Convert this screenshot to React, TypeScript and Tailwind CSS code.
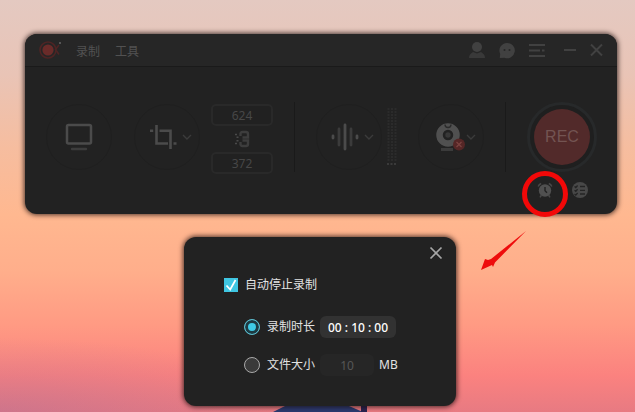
import { useState } from "react";
import type { ReactNode } from "react";

function ToolButton({ label, children, menu }: { label: string; children: ReactNode; menu?: boolean }) {
  return (
    <button
      type="button"
      aria-label={label}
      className={`flex h-[66px] w-[66px] shrink-0 items-center rounded-full border border-[#1f1f1f] text-[#4b4b4b] ${
        menu ? "justify-end gap-1 pr-[6px]" : "justify-center"
      }`}
    >
      {children}
      {menu && (
        <svg width="12" height="12" viewBox="0 0 12 12" fill="none" stroke="#3b3b3b" strokeWidth="1.4">
          <path d="M2 4l4 4 4-4" />
        </svg>
      )}
    </button>
  );
}

function SizeInput({ label, value }: { label: string; value: string }) {
  return (
    <input
      aria-label={label}
      defaultValue={value}
      className="h-[22px] w-[62px] rounded-[5px] border-2 border-[#292929] bg-[#212121] text-center text-xs text-[#474747] outline-none"
    />
  );
}

function Divider() {
  return <div className="h-[70px] w-px bg-[#1a1a1a]" />;
}

function TitleBar() {
  return (
    <header className="flex h-[33px] items-center rounded-t-xl border-b border-[#1a1a1a] bg-[#262626] pr-[14px] pl-[13px] text-xs text-[#525252]">
      <svg width="24" height="20" viewBox="0 0 24 20" fill="none">
        <circle cx="10" cy="10" r="8" stroke="#4e2424" strokeWidth="1.6" />
        <circle cx="10" cy="10" r="5.6" fill="#6a2b29" />
        <path d="M21 5l-3.5 4.500 3.500 5" stroke="#4e2424" strokeWidth="1.6" />
        <circle cx="22" cy="3" r="1" fill="#666" />
      </svg>
      <nav className="ml-[14px] flex gap-[15px] pt-1">
        <button type="button">录制</button>
        <button type="button">工具</button>
      </nav>
      <div className="ml-auto flex items-center gap-[14px] text-[#414141]">
        <button type="button" aria-label="账户">
          <svg width="16" height="18" viewBox="0 0 16 18" fill="currentColor">
            <circle cx="8" cy="6" r="5" />
            <path d="M0 17c0-3 1.500-4.500 4-6l4 1.500 4-1.500c2.500 1.500 4 3 4 6z" fill="#393939" />
          </svg>
        </button>
        <button type="button" aria-label="反馈">
          <svg width="16" height="18" viewBox="0 0 16 18">
            <path d="M8 2a7.600 7.600 0 1 1-2.500 14.700L.8 17l.4-4A7.600 7.600 0 0 1 8 2z" fill="currentColor" />
            <circle cx="5.500" cy="9" r="1" fill="#262626" />
            <circle cx="10.500" cy="9" r="1" fill="#262626" />
          </svg>
        </button>
        <button type="button" aria-label="菜单">
          <svg width="16" height="18" viewBox="0 0 16 18" fill="none" stroke="currentColor" strokeWidth="2">
            <path d="M0 4h16M0 9.500h11M13 9.500h2.500M0 15h16" />
          </svg>
        </button>
        <button type="button" aria-label="最小化" className="ml-[5px]">
          <svg width="12" height="14" viewBox="0 0 12 14" stroke="currentColor" strokeWidth="2">
            <path d="M0 7h12" />
          </svg>
        </button>
        <button type="button" aria-label="关闭">
          <svg width="13" height="14" viewBox="0 0 13 14" stroke="currentColor" strokeWidth="2">
            <path d="M1 1.500l11 11M12 1.500l-11 11" />
          </svg>
        </button>
      </div>
    </header>
  );
}

function LevelMeter() {
  return (
    <svg width="10" height="58" viewBox="0 0 10 58" fill="none" strokeWidth="2">
      <path d="M1.500 0v54M5 0v54M8.500 0v54" stroke="#2b2b2b" strokeDasharray="2 1" />
      <path d="M0 56h10" stroke="#3a3a3a" strokeDasharray="2 1.500" />
    </svg>
  );
}

function Recorder() {
  return (
    <section className="rounded-xl bg-[#222222] shadow-[0_0_5px_1px_rgba(20,10,10,0.75)]">
      <TitleBar />
      <div className="flex items-center justify-between pt-[33px] pr-[20px] pl-[21px]">
        <div className="flex items-center">
          <ToolButton label="全屏">
            <svg width="28" height="28" viewBox="0 0 28 28" fill="none" stroke="currentColor">
              <rect x="2" y="2" width="24" height="18.500" rx="1.500" strokeWidth="2.500" />
              <path d="M7 26h14" stroke="#3c3c3c" strokeWidth="2.400" strokeLinecap="round" />
            </svg>
          </ToolButton>
          <div className="ml-[22px]">
            <ToolButton label="自定义区域" menu>
              <svg width="28" height="26" viewBox="0 0 28 26" fill="none" stroke="currentColor" strokeWidth="2.600">
                <path d="M7.500 1v18.500H19M10.500 6.700h11V25M1 6.700h3.200M24.500 19.500h3" />
              </svg>
            </ToolButton>
          </div>
          <div className="ml-[11px] flex flex-col items-center gap-[3px] pt-1">
            <SizeInput label="宽度" value="624" />
            <button type="button" aria-label="锁定比例">
              <svg width="16" height="20" viewBox="0 0 16 20" fill="none" stroke="#3d3d3d" strokeWidth="2.400">
                <path d="M6.500 7V5.500a2 2 0 0 1 2-2.500h3.500a2 2 0 0 1 2 2v3.500H8.500M6.500 13v1.500a2 2 0 0 0 2 2.500h3.500a2 2 0 0 0 2-2v-3.500H8.500" />
                <path d="M1 5.500h2M1 14.500h2M2.500 8.300h2M2.500 11.700h2" stroke="#4a4a4a" strokeWidth="1.600" />
              </svg>
            </button>
            <SizeInput label="高度" value="372" />
          </div>
        </div>
        <Divider />
        <div className="flex items-center gap-[5px]">
          <ToolButton label="声音" menu>
            <svg width="28" height="28" viewBox="0 0 28 28" fill="none" stroke="currentColor" strokeWidth="2.800" strokeLinecap="round">
              <path d="M14 2v24M2 13v2M26 13v2" />
              <path d="M8 6v16M20 6v16" stroke="#3b3b3b" />
            </svg>
          </ToolButton>
          <LevelMeter />
        </div>
        <ToolButton label="摄像头" menu>
          <svg className="-mr-1" width="32" height="30" viewBox="0 0 32 30" fill="none">
            <circle cx="15" cy="13" r="8.500" stroke="#505050" strokeWidth="6.500" />
            <circle cx="15" cy="13" r="2.700" fill="#383838" />
            <path d="M12 2.500a3 3 0 0 0 6 0" stroke="#2b2b2b" strokeWidth="1.400" />
            <path d="M8 27.500h12" stroke="#3b3b3b" strokeWidth="3" />
            <circle cx="26" cy="22.500" r="6" fill="#552626" />
            <path d="M23.500 20l5 5M28.500 20l-5 5" stroke="#7d4341" strokeWidth="1.200" />
          </svg>
        </ToolButton>
        <Divider />
        <button
          type="button"
          className="flex h-[70px] w-[70px] items-center justify-center rounded-full border-[3px] border-[#27292a] bg-[#1f1f1f]"
        >
          <span className="flex h-14 w-14 items-center justify-center rounded-full bg-[#522a2a] font-['Liberation_Sans',sans-serif] text-base text-[#735452]">
            REC
          </span>
        </button>
      </div>
      <div className="flex justify-end gap-[19px] pt-[8px] pr-[29px] pb-4">
        <button type="button" aria-label="定时录制" className="relative h-4 w-4">
          <svg width="16" height="16" viewBox="0 0 16 16" fill="none">
            <circle cx="8" cy="8.500" r="6.200" fill="#505050" />
            <path d="M1.200 4.500a5 5 0 0 1 3-3M14.800 4.500a5 5 0 0 0-3-3M4.500 13l-1.500 2.300M11.500 13l1.500 2.300" stroke="#484848" strokeWidth="1.500" />
            <path d="M8 5v3.800l2 2" stroke="#222" strokeWidth="1.400" />
          </svg>
          <span className="absolute -top-[11px] -left-[15px] h-[46px] w-[46px] rounded-full border-[5px] border-[#f20808]" />
        </button>
        <button type="button" aria-label="任务列表" className="h-4 w-4">
          <svg width="16" height="16" viewBox="0 0 16 16" fill="none">
            <circle cx="8" cy="8" r="8" fill="#484848" />
            <path d="M2.500 4.500l1.300 1 1.800-2M2.500 8.300l1.300 1 1.800-2M2.500 12l1.300 1 1.800-2M8 4.500h5M8 8.300h5M8 12h5" stroke="#242424" strokeWidth="1.300" />
          </svg>
        </button>
      </div>
    </section>
  );
}

const radioClass =
  "h-4 w-4 appearance-none rounded-full border border-[#a8a8a8] bg-[#3a3a3a] checked:border-[#5fb9c9] checked:bg-[#3fcbe6] checked:shadow-[inset_0_0_0_3px_#1d3a42]";

function AutoStopDialog() {
  const [mode, setMode] = useState("time");
  return (
    <section
      role="dialog"
      aria-label="自动停止录制"
      className="relative w-[272px] rounded-xl bg-[#222222] pt-[9px] pb-[30px] text-xs text-[#e2e2e2] shadow-[0_0_5px_1px_rgba(20,10,10,0.75)]"
    >
      <div className="flex justify-end pr-[13px]">
        <button type="button" aria-label="关闭">
          <svg width="14" height="14" viewBox="0 0 14 14" stroke="#a6a6a6" strokeWidth="1.700">
            <path d="M1.500 1.500l11 11M12.500 1.500l-11 11" />
          </svg>
        </button>
      </div>
      <label className="mt-[17px] ml-10 flex h-4 items-center gap-[7px]">
        <span className="grid h-[14px] w-[14px]">
          <input type="checkbox" defaultChecked className="col-start-1 row-start-1 h-[14px] w-[14px] appearance-none bg-[#3fc6e2]" />
          <svg className="pointer-events-none col-start-1 row-start-1" width="14" height="14" viewBox="0 0 14 14" fill="none" stroke="#fff" strokeWidth="1.700">
            <path d="M2.500 7.500l3.700 4L11.500 2" />
          </svg>
        </span>
        自动停止录制
      </label>
      <div className="mt-[23px] ml-[60px] flex h-[22px] items-center">
        <label className="flex items-center gap-[7px]">
          <input type="radio" name="mode" checked={mode === "time"} onChange={() => setMode("time")} className={radioClass} />
          录制时长
        </label>
        <input
          aria-label="录制时长"
          defaultValue="00 : 10 : 00"
          className="ml-[5px] h-[22px] w-[76px] rounded-md bg-[#323232] text-center font-medium text-white outline-none"
        />
      </div>
      <div className="mt-4 ml-[60px] flex h-[22px] items-center">
        <label className="flex items-center gap-[7px]">
          <input type="radio" name="mode" checked={mode === "size"} onChange={() => setMode("size")} className={radioClass} />
          文件大小
        </label>
        <input
          aria-label="文件大小"
          defaultValue="10"
          disabled={mode !== "size"}
          className="ml-[5px] h-[22px] w-[54px] rounded-md bg-[#262626] text-center text-[#565656] outline-none"
        />
        <span className="ml-[5px]">MB</span>
      </div>
    </section>
  );
}

export default function App() {
  return (
    <main className="relative min-h-screen overflow-hidden bg-[linear-gradient(to_bottom,#e4c9c1_0%,#e9c4b6_18%,#f6bd9f_36%,#ffb890_52%,#ffae8b_66%,#ff9a83_79%,#fb827f_91%,#e87a82_100%)] pt-[34px] pr-[18px] pl-[25px] font-['Noto_Sans','Noto_Sans_CJK_SC',sans-serif]">
      <div className="absolute bottom-0 left-0 h-[75px] w-[300px] bg-[radial-gradient(ellipse_at_bottom_left,rgba(175,110,150,0.45),transparent_70%)]" />
      <svg className="absolute bottom-0 left-[270px]" width="100" height="8" viewBox="0 0 100 8">
        <path d="M3 8l12-6h64l14 6z" fill="#2c3a70" />
        <path d="M91 0h6v8h-6z" fill="#2b2350" />
      </svg>
      <svg className="absolute top-[230px] left-[480px]" width="47" height="41" viewBox="0 0 47 41">
        <path d="M46 1L15 32.500l-2 4.500-1-2-11 5 4-11 3 1 3-1z" fill="#ee0c0c" />
      </svg>
      <div className="relative">
        <Recorder />
        <div className="mt-[23px] flex justify-center pr-[2px]">
          <AutoStopDialog />
        </div>
      </div>
    </main>
  );
}
